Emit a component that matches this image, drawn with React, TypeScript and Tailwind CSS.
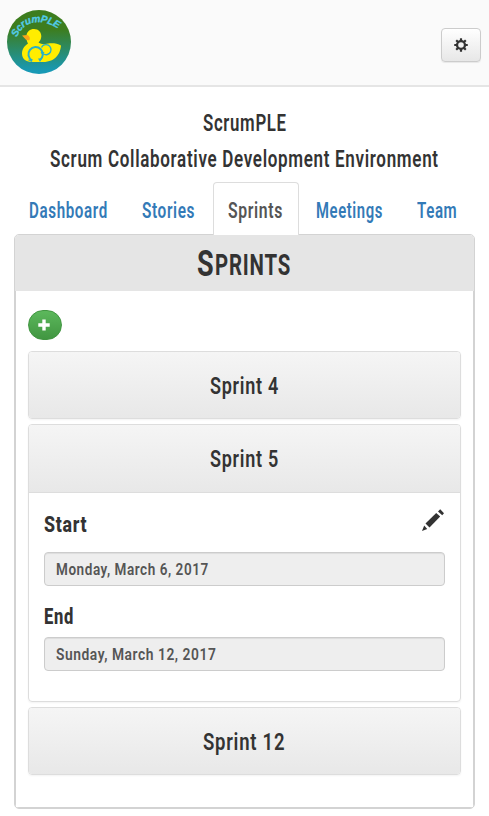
import { useLayoutEffect, useRef, useState } from "react";

type FitTextProps = { text: string; width: number; className?: string };

// Condenses a line of text horizontally so that it fills the given width.
function FitText({ text, width, className = "" }: FitTextProps) {
  const ref = useRef<HTMLSpanElement>(null);
  const [scale, setScale] = useState(1);
  useLayoutEffect(() => {
    if (ref.current) setScale(width / ref.current.offsetWidth);
  }, [text, width]);
  return (
    <span className="inline-block text-left whitespace-nowrap align-top" style={{ width }}>
      <span
        ref={ref}
        className={`inline-block origin-left align-top tracking-[0.04em] ${className}`}
        style={{ transform: `scaleX(${scale})` }}
      >
        {text}
      </span>
    </span>
  );
}

function Logo() {
  return (
    <svg className="h-16 w-16" viewBox="0 0 64 64">
      <defs>
        <linearGradient id="pond" x1="0" y1="0" x2="0" y2="1">
          <stop offset="0.3" stopColor="#3d7d1e" />
          <stop offset="0.95" stopColor="#1899b5" />
        </linearGradient>
        <path id="arc" d="M10 27.500 C16 11 35 6.500 53.500 20.500" />
      </defs>
      <circle cx="32" cy="32" r="32" fill="url(#pond)" />
      <text
        fill="#52cbe8"
        stroke="#52cbe8"
        strokeWidth="0.3"
        fontFamily="'Liberation Sans', sans-serif"
        fontSize="10"
        fontWeight="bold"
        fontStyle="italic"
      >
        <textPath href="#arc" textLength="49" lengthAdjust="spacing">ScrumPLE</textPath>
      </text>
      <path
        d="M19.500 25.500 C20 21.500 23 19 27 19 C31.500 19 34.500 22.500 34.300 26.500 C34.200 29 33 31 31.500 32.500 C36 35.500 39 33.500 43 33.200 C47 33 51 33.500 54 35.500 C53.500 43 49 52 36 52 L25 52 C18 52 15 48 15 43.500 C15 39 17.500 36 21 33.500 C20 32 19 29 19.500 25.500 Z"
        fill="#ffed00"
      />
      <path d="M15 25.500 L20.500 25 C23 26.500 23.500 29 22 30.500 L19 29.800 Z" fill="#f9a51a" />
      <g fill="none" stroke="#27b0c8">
        <path d="M25 50.500 A7.200 7.200 0 1 1 33 50" strokeWidth="2" />
        <path d="M34.500 37.500 A5 5 0 1 1 36.500 44" strokeWidth="1.400" />
      </g>
      <path d="M31 48.500 L35 48.500 L33 52 Z M20.500 50 L25.500 49 L25 52 Z M33.500 42 L37.500 42 L35.500 45.500 Z" fill="#27b0c8" />
    </svg>
  );
}

function GearIcon() {
  return (
    <svg className="mr-px h-3.5 w-3.5" viewBox="0 0 14 14">
      <g fill="#333">
        {[0, 45, 90, 135].map((angle) => (
          <rect key={angle} x="5.9" y="0.2" width="2.2" height="13.6" rx="0.4" transform={`rotate(${angle} 7 7)`} />
        ))}
        <circle cx="7" cy="7" r="5.100" />
      </g>
      <circle cx="7" cy="7" r="2.800" fill="#f2f2f2" />
    </svg>
  );
}

function PencilIcon() {
  return (
    <svg className="mr-px h-[22px] w-[22px]" viewBox="0 0 22 22" fill="#333">
      <path d="M0 22 L2.200 16.500 L3.500 18 L5.200 20 Z" />
      <path d="M3.500 14.500 L14.200 3.900 L18.200 7.600 L7.500 18.500 Z" />
      <path d="M16 2.500 L18.200 0.300 L22 4.200 L20.200 6.200 Z" />
    </svg>
  );
}

const tabs = [
  { label: "Dashboard", width: 79, cell: "w-[109px] pl-[15px]", active: false },
  { label: "Stories", width: 53, cell: "w-[90px] justify-center", active: false },
  { label: "Sprints", width: 55, cell: "w-[86px] pl-3.5", active: true },
  { label: "Meetings", width: 67, cell: "w-[102px] pl-[17px]", active: false },
  { label: "Team", width: 40, cell: "w-[73px] pl-4", active: false },
];

function SprintHeading({ text, width, open = false }: { text: string; width: number; open?: boolean }) {
  return (
    <div
      className={`${open ? "h-[67px]" : "h-[66px]"} bg-linear-to-b from-[#f5f5f5] to-[#e8e8e8] pr-px text-center text-[23.500px] leading-[69px] font-semibold`}
    >
      <FitText text={text} width={width} />
    </div>
  );
}

function DateField({ value, width }: { value: string; width: number }) {
  return (
    <div className="h-[34px] rounded border border-[#ccc] bg-[#eee] pl-[11px] text-[17px] leading-[32px] font-semibold text-[#555] shadow-[inset_0_1px_1px_rgba(0,0,0,0.075)]">
      <FitText text={value} width={width} />
    </div>
  );
}

const card = "overflow-hidden rounded border border-[#ddd] shadow-[0_1px_2px_rgba(0,0,0,0.05)]";

export default function App() {
  return (
    <div className="h-[816px] w-[489px] overflow-hidden bg-white font-['Roboto',sans-serif] text-[#333]">
      <header className="flex h-[87px] items-start justify-between border-b-2 border-[#e5e5e5] bg-[#fafafa] pr-2 pl-[7px]">
        <div className="mt-2.5">
          <Logo />
        </div>
        <button className="mt-7 flex h-[34px] w-10 items-center justify-center rounded border border-[#ccc] bg-linear-to-b from-white to-[#e7e7e7] shadow-[0_1px_1px_rgba(0,0,0,0.075)]">
          <GearIcon />
        </button>
      </header>

      <div className="pt-[18px] text-center text-[24px] leading-9 font-semibold">
        <div><FitText text="ScrumPLE" width={84} /></div>
        <div><FitText text="Scrum Collaborative Development Environment" width={389} /></div>
      </div>

      <nav className="mt-[5px] flex h-[52px] pl-3.5">
        {tabs.map((tab) => (
          <a
            key={tab.label}
            className={`flex ${tab.cell} ${
              tab.active
                ? "relative z-10 h-[53px] rounded-t border border-b-0 border-[#ddd] bg-white text-[#555]"
                : "h-[53px] pt-px text-[#337ab7]"
            } text-[21.500px] leading-[55px] font-semibold`}
          >
            <FitText text={tab.label} width={tab.width} />
          </a>
        ))}
      </nav>

      <main className="mx-3.5 h-[575px] overflow-hidden rounded-[5px] border border-[#d3d3d3]">
        <h1 className="h-14 bg-[#e5e5e5] pr-px text-center text-[36px] leading-[59px] font-bold">
          <span className="inline-flex items-baseline">
            <FitText text="S" width={18} className="text-[36px]" />
            <FitText text="PRINTS" width={76} className="text-[30px]" />
          </span>
        </h1>
        <div className="h-[517px] border-x border-b border-[#d3d3d3] px-3 pt-[19px]">
          <button className="flex h-[30px] w-[34px] items-center justify-center rounded-[15px] border border-[#419641] bg-linear-to-b from-[#5cb85c] to-[#419641]">
            <svg className="mr-[3px] h-3 w-3" viewBox="0 0 12 12">
              <path d="M6 0.500 V11.500 M0.300 6 H11.700" stroke="white" strokeWidth="3.400" />
            </svg>
          </button>

          <div className="mt-[11px] flex flex-col gap-[5px]">
            <section className={card}>
              <SprintHeading text="Sprint 4" width={69} />
            </section>

            <section className={`${card} h-[278px]`}>
              <SprintHeading text="Sprint 5" width={69} open />
              <div className="border-t border-[#ddd] px-[15px]">
                <div className="flex h-[59px] justify-between pt-4">
                  <div className="text-[21.500px] leading-[31px] font-extrabold">
                    <FitText text="Start" width={43} />
                  </div>
                  <PencilIcon />
                </div>
                <DateField value="Monday, March 6, 2017" width={153} />
                <div className="h-[51px] pt-[15px] text-[21.500px] leading-[31px] font-extrabold">
                  <FitText text="End" width={30} />
                </div>
                <DateField value="Sunday, March 12, 2017" width={160} />
              </div>
            </section>

            <section className={card}>
              <SprintHeading text="Sprint 12" width={82} />
            </section>
          </div>
        </div>
      </main>
    </div>
  );
}
